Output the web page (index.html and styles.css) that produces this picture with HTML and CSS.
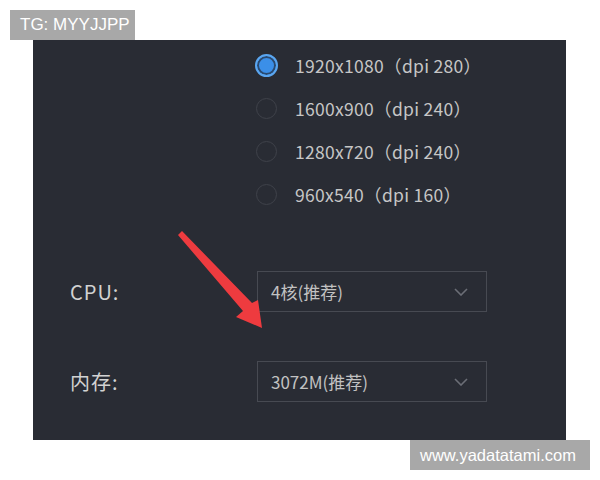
FILE: index.html
```html
<!DOCTYPE html>
<html lang="zh-CN">
<head>
    <meta charset="UTF-8">
    <title>分辨率设置</title>
    <link rel="stylesheet" href="styles.css">
</head>

<body>
    <div class="tag tag-top">TG: MYYJJPP</div>

    <div class="panel">
        <div class="radio-list">
            <div class="radio-row">
                <span class="radio checked"></span>
                <span class="radio-text">1920x1080（dpi 280）</span>
            </div>
            <div class="radio-row">
                <span class="radio"></span>
                <span class="radio-text">1600x900（dpi 240）</span>
            </div>
            <div class="radio-row">
                <span class="radio"></span>
                <span class="radio-text">1280x720（dpi 240）</span>
            </div>
            <div class="radio-row">
                <span class="radio"></span>
                <span class="radio-text">960x540（dpi 160）</span>
            </div>
        </div>

        <div class="form-row cpu-row">
            <span class="form-label">CPU:</span>
            <div class="select">
                <span class="select-text">4核(推荐)</span>
                <svg class="chevron" width="14" height="8" viewBox="0 0 14 8">
                    <path d="M1 1 L7 7 L13 1" fill="none" stroke="#6b6e76" stroke-width="1.6"/>
                </svg>
            </div>
        </div>

        <div class="form-row mem-row">
            <span class="form-label">内存:</span>
            <div class="select">
                <span class="select-text">3072M(推荐)</span>
                <svg class="chevron" width="14" height="8" viewBox="0 0 14 8">
                    <path d="M1 1 L7 7 L13 1" fill="none" stroke="#6b6e76" stroke-width="1.6"/>
                </svg>
            </div>
        </div>

        <!-- red pointer drawn over the panel -->
        <svg class="arrow" width="533" height="400" viewBox="0 0 533 400">
            <polygon points="145,195 149,191 219,263 225,260 229,288 203,277 210,271" fill="#ee3b3f"/>
        </svg>
    </div>

    <div class="tag tag-bottom">www.yadatatami.com</div>
</body>
</html>
```

FILE: styles.css
```css
body {
    font-family: "Noto Sans CJK SC", "Noto Sans", sans-serif;
    background: #fff;
    margin: 0;
    padding: 0;
}

.tag {
    background: #a8a8a8;
    color: #fff;
    font-family: "Liberation Sans", Arial, sans-serif;
    height: 30px;
    line-height: 30px;
    box-sizing: border-box;
}

.tag-top {
    margin: 10px 0 0 10px;
    width: 125px;
    padding-left: 10px;
    font-size: 17px;
}

.tag-bottom {
    margin-left: 410px;
    width: 180px;
    padding-left: 10px;
    font-size: 16.5px;
}

.panel {
    position: relative;
    margin-left: 33px;
    width: 533px;
    height: 400px;
    background: #292c34;
    box-sizing: border-box;
    padding-top: 4px;
}

.radio-list {
    padding-left: 223px;
}

.radio-row {
    display: flex;
    align-items: center;
    height: 43px;
}

.radio {
    width: 21px;
    height: 21px;
    border: 1.5px solid #3f424a;
    border-radius: 50%;
    box-sizing: border-box;
    margin-right: 18px;
}

.radio.checked {
    width: 23px;
    height: 23px;
    margin-left: -1px;
    margin-right: 17px;
    border: 2px solid #5aa6f0;
    background: #3b8fe8;
    box-shadow: inset 0 0 0 2px #2a4a70;
}

.radio-text {
    color: #c6c6c6;
    font-size: 17.5px;
    letter-spacing: 0.3px;
}

.form-row {
    display: flex;
    align-items: center;
    padding-left: 37px;
}

.cpu-row {
    margin-top: 55px;
}

.mem-row {
    margin-top: 49px;
}

.form-label {
    width: 187px;
    color: #d2d2d2;
    font-size: 20px;
    letter-spacing: 1px;
}

.select {
    display: flex;
    align-items: center;
    justify-content: space-between;
    width: 230px;
    height: 41px;
    border: 1px solid #474a52;
    box-sizing: border-box;
    padding: 0 18px 0 13px;
}

.select-text {
    color: #c2c2c2;
    font-size: 17px;
}

.arrow {
    position: absolute;
    left: 0;
    top: 0;
}
```
